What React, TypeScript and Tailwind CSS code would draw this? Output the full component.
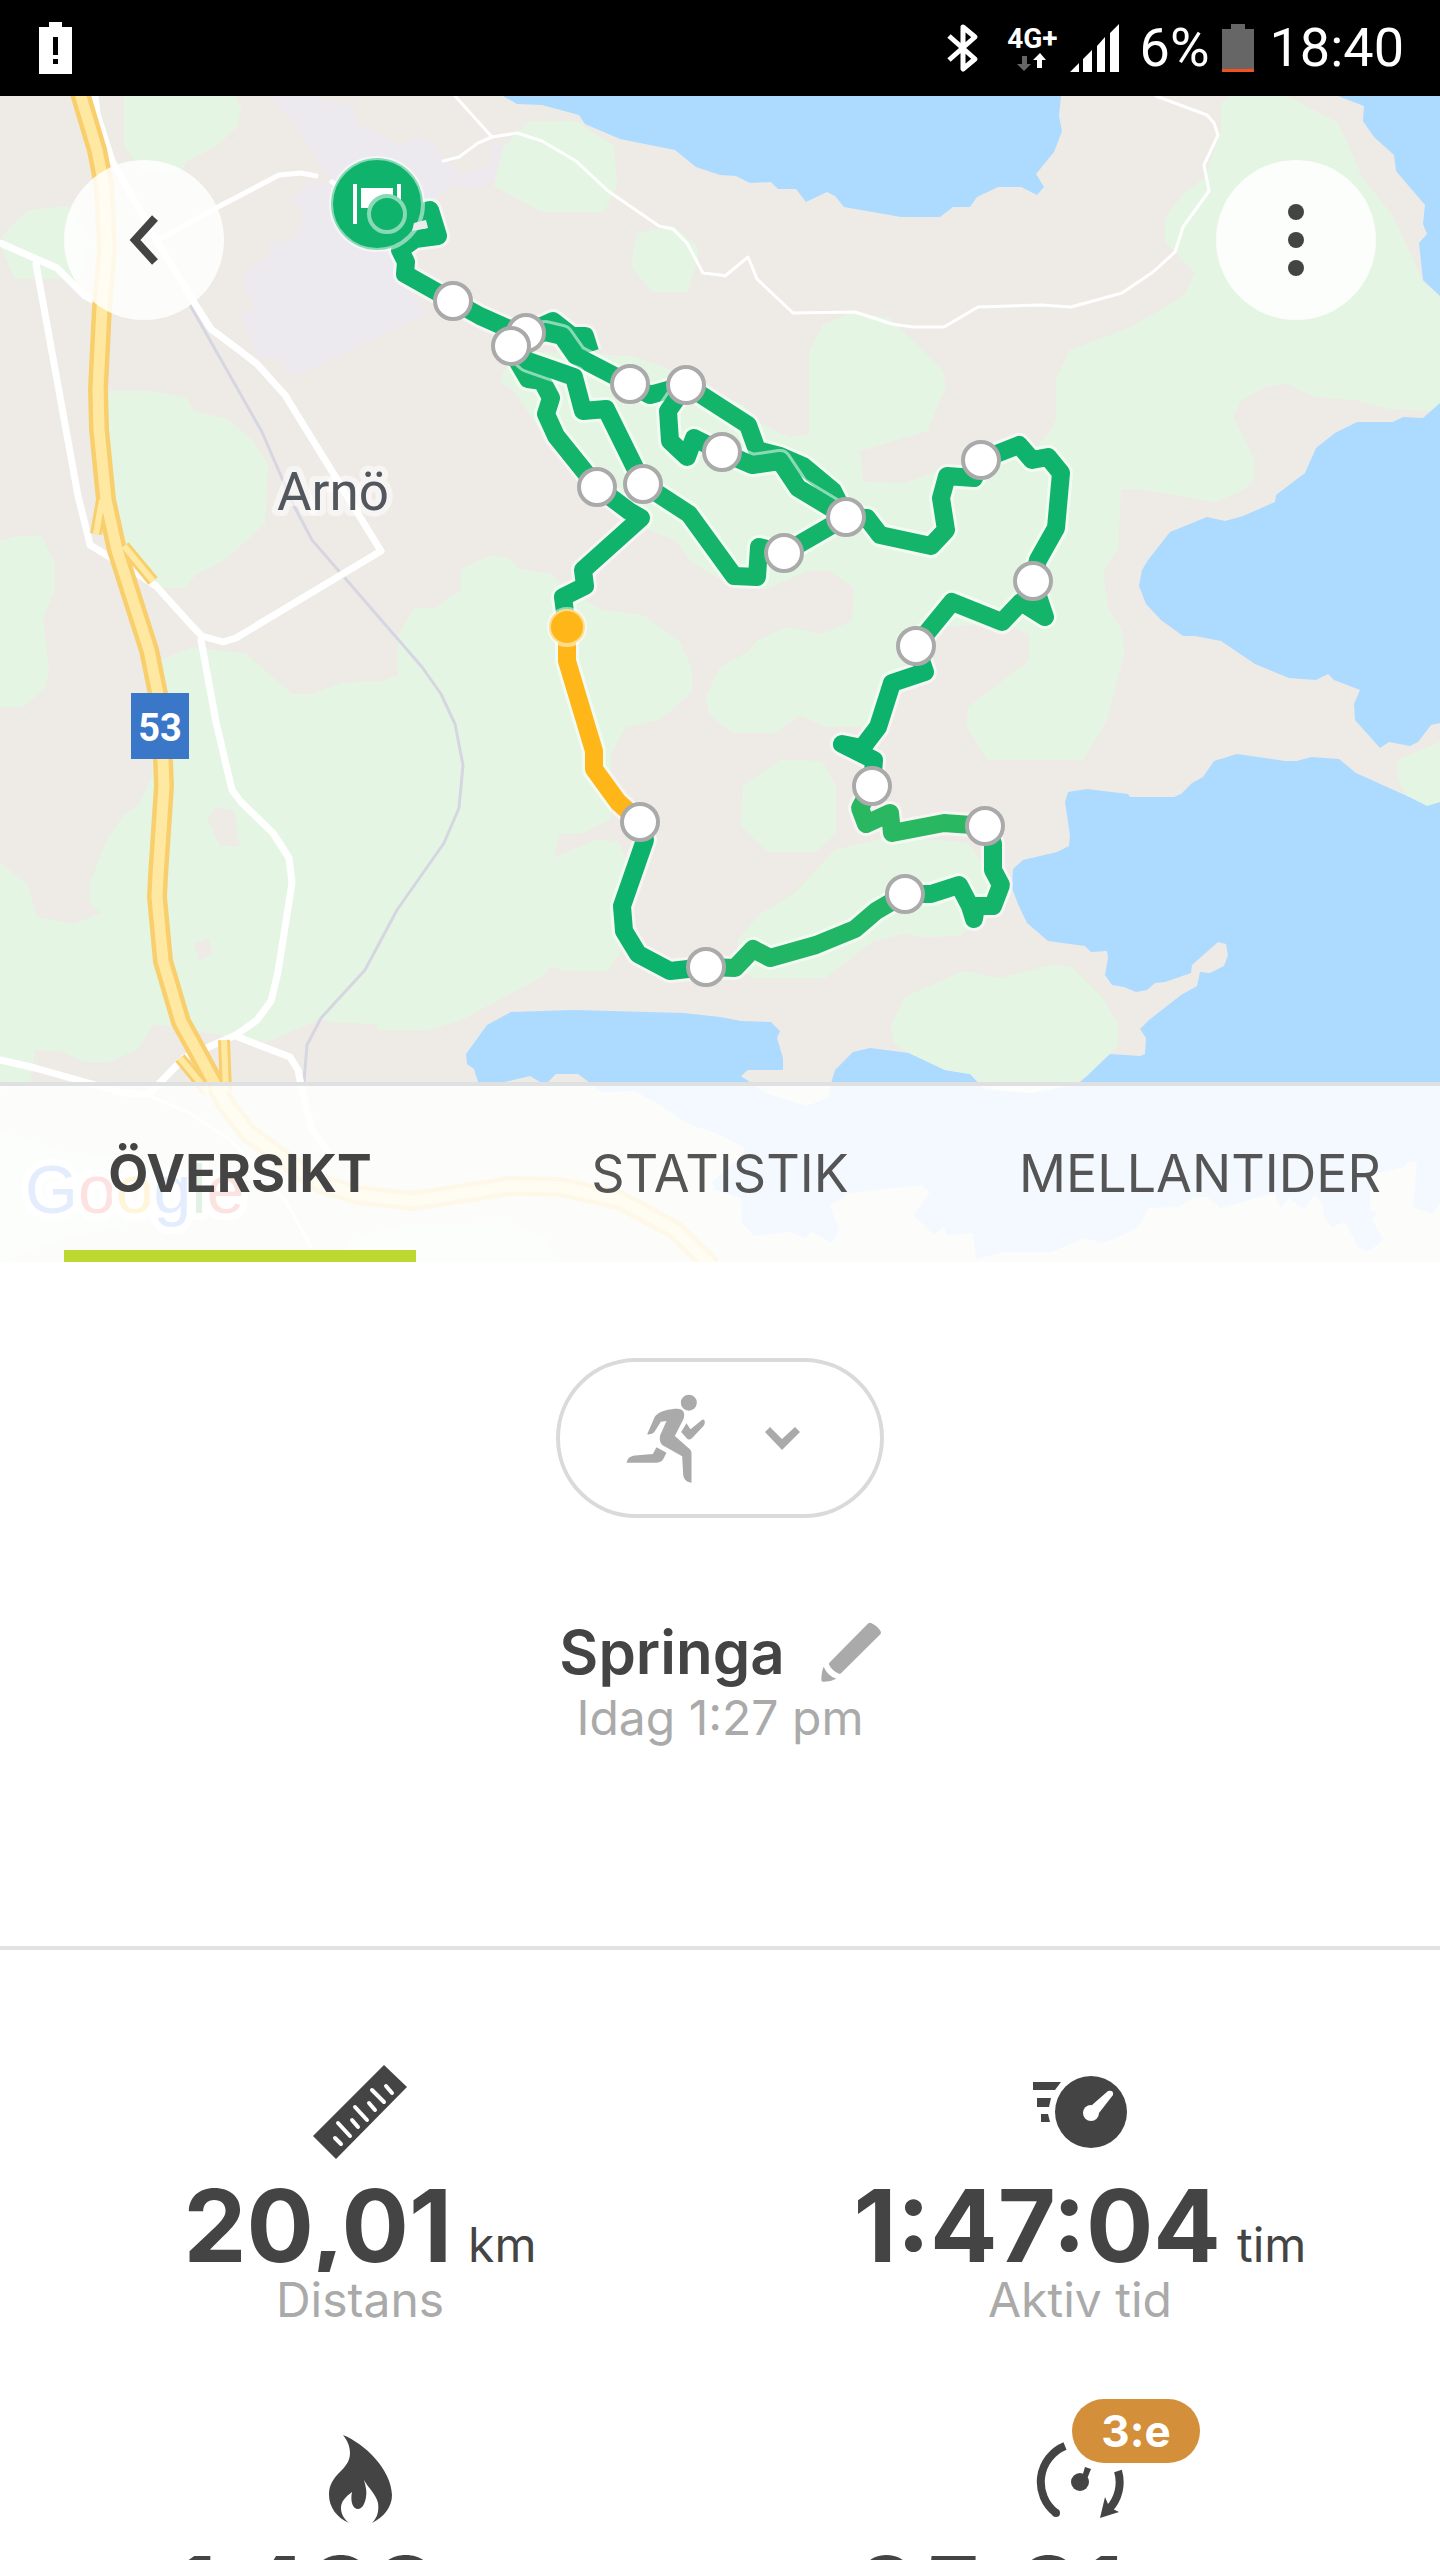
import React, { useState } from 'react'

type TabId = 'overview' | 'stats' | 'splits'

const TABS: { id: TabId; label: string }[] = [
  { id: 'overview', label: 'ÖVERSIKT' },
  { id: 'stats', label: 'STATISTIK' },
  { id: 'splits', label: 'MELLANTIDER' },
]

const PARKS = [
  '124,96 124,145 142,171 181,171 187,161 216,146 237,127 241,107 235,96',
  '3,235 27,211 64,206 72,209 90,240 80,279 15,279 2,250',
  '105,391 152,391 186,398 194,411 227,419 253,441 268,464 265,523 246,541 223,561 195,575 186,588 156,588 135,570 120,540 108,500 100,430',
  '0,541 18,536 41,536 55,563 55,590 43,617 49,670 45,688 23,707 0,707',
  '530,121 576,121 614,146 617,186 604,212 542,212 494,186 503,148',
  '637,233 673,226 697,246 698,259 687,292 652,292 631,266',
  '503,371 528,352 597,354 634,357 666,368 720,396 743,404 759,423 789,437 809,435 809,352 823,325 853,312 890,318 943,371 946,387 927,431 860,451 863,482 906,483 950,466 977,461 1037,446 1048,434 1056,420 1056,379 1070,350 1129,328 1184,296 1195,273 1165,241 1165,218 1184,193 1206,177 1209,164 1221,132 1221,104 1230,96 1287,96 1338,123 1363,179 1393,216 1423,282 1440,296 1440,411 1390,409 1356,400 1315,397 1288,384 1266,386 1241,401 1233,416 1254,459 1254,479 1243,490 1215,502 1140,489 1121,489 1118,549 1103,571 1108,608 1122,631 1124,654 1107,720 1083,760 987,760 967,726 968,707 1029,661 1029,634 1009,626 973,625 940,627 890,680 872,727 826,727 799,715 776,733 733,733 720,724 709,713 706,697 720,667 748,652 757,641 786,627 823,634 852,621 854,588 830,571 810,570 766,589 734,586 720,579 693,563 675,540 647,529 597,493 542,432 514,391 501,382',
  '161,660 193,647 246,654 292,694 312,694 342,683 381,681 398,676 398,636 414,609 436,608 461,590 461,569 489,556 509,558 519,569 553,575 565,590 602,610 643,615 680,642 692,669 692,692 661,719 625,728 611,754 611,819 583,833 560,834 553,858 597,840 618,841 627,861 621,951 608,971 566,971 551,966 542,977 459,1021 427,1030 377,1030 377,1024 333,1022 321,1019 266,1042 248,1040 197,1031 154,1024 138,1049 110,1062 85,1062 60,1051 35,1050 30,1082 0,1090 0,863 28,885 37,917 73,924 102,913 90,904 90,883 108,838 124,815 138,806 152,777 152,694',
  '780,760 822,761 836,786 836,833 816,852 768,852 741,826 743,786',
  '835,850 895,836 968,843 994,880 990,915 959,936 920,937 905,933 872,942 825,978 752,978 738,965 738,940 759,915 796,892',
  '0,1130 60,1150 200,1170 190,1210 60,1240 0,1262',
  '350,1240 400,1225 510,1222 550,1240 555,1262 340,1262',
]

// drawn after the water
const SHORE_PARKS = [
  '963,971 1000,978 1051,965 1071,967 1103,998 1118,1024 1118,1045 1087,1076 1069,1086 1032,1093 995,1090 982,1085 970,1074 945,1070 911,1054 894,1044 891,1026 905,997',
  '1398,760 1440,742 1440,802 1427,806 1406,795 1398,779',
]

const CLEARINGS = ['216,807 234,810 240,846 220,846 207,818', '194,943 209,938 213,954 199,961']

const URBAN =
  '269,96 298,127 317,161 331,182 308,184 289,198 303,214 294,239 266,243 272,255 248,268 242,282 253,307 240,316 259,359 276,357 294,377 427,314 400,270 420,210 450,186 478,189 494,179 503,145 491,141 491,164 461,175 432,143 419,137 400,145 356,123 354,105 321,102 320,96'

const WATER = [
  '503,96 517,104 542,105 579,115 585,124 620,139 675,150 696,167 720,175 736,176 750,183 771,182 778,189 796,189 806,202 827,192 835,196 844,207 901,217 940,217 953,207 970,207 977,197 998,187 1021,187 1037,195 1044,187 1036,174 1054,152 1062,131 1059,116 1061,96',
  '1338,96 1364,106 1363,121 1374,137 1394,155 1396,171 1425,205 1423,224 1427,234 1419,243 1423,280 1440,296 1440,96',
  '1440,403 1423,418 1403,417 1393,422 1357,422 1335,433 1316,448 1305,473 1276,495 1275,502 1243,516 1225,521 1207,517 1170,532 1148,560 1142,570 1139,586 1146,604 1161,620 1183,636 1195,636 1221,641 1255,664 1289,678 1316,680 1328,674 1334,680 1360,690 1354,704 1355,720 1380,748 1389,742 1410,746 1418,742 1431,725 1440,723',
  '1068,792 1087,789 1128,794 1130,797 1174,797 1181,794 1192,783 1203,777 1214,761 1237,754 1285,761 1297,761 1311,757 1339,759 1356,773 1427,805 1440,802 1440,1084 1078,1084 1110,1054 1140,1056 1145,1054 1146,1038 1140,1029 1149,1020 1181,995 1197,986 1200,972 1210,973 1224,966 1228,955 1226,944 1218,942 1192,965 1191,973 1165,982 1155,983 1147,990 1136,992 1124,987 1112,985 1105,975 1108,958 1107,951 1091,952 1085,946 1048,941 1027,923 1018,904 1012,888 1013,869 1023,860 1057,852 1069,846 1070,835 1065,802',
  '511,1012 574,1010 684,1013 720,1017 741,1021 771,1022 780,1031 777,1038 783,1058 783,1070 748,1070 741,1076 766,1093 806,1106 828,1098 832,1080 835,1070 853,1052 870,1048 909,1053 945,1070 970,1074 985,1090 1032,1093 1078,1082 1440,1082 1440,1203 1432,1214 1413,1207 1417,1162 1409,1161 1404,1167 1370,1175 1370,1210 1377,1212 1372,1220 1384,1240 1367,1252 1358,1247 1345,1222 1332,1227 1324,1217 1322,1202 1314,1195 1304,1210 1289,1198 1280,1208 1275,1193 1232,1205 1220,1208 1207,1197 1195,1197 1179,1207 1149,1208 1138,1227 1117,1238 1102,1243 1085,1238 1051,1252 1005,1252 976,1259 973,1233 947,1235 944,1227 934,1235 913,1215 930,1192 922,1185 849,1193 830,1206 839,1230 832,1243 812,1232 805,1238 789,1232 754,1236 742,1223 741,1198 715,1190 712,1182 720,1175 741,1157 745,1148 720,1135 686,1123 657,1103 634,1091 602,1092 578,1074 556,1074 548,1082 540,1082 530,1076 505,1082 478,1082 474,1069 467,1064 466,1054 487,1025',
]

const ROADS = [
  '95,96 97,114 112,161 138,207 158,243 197,307 211,329 239,350 257,364 285,395 381,551 236,638 223,642 202,636 193,627 156,586 138,574 90,545 88,536 78,496 36,264',
  '0,243 57,268 85,296 100,304',
  '201,640 216,722 232,790 241,802 273,833 289,858 292,883 278,972 271,1001 257,1020 236,1035 184,1058 149,1094 124,1093 35,1068 0,1060',
  '238,1037 290,1057 298,1070 302,1090 312,1130 328,1152',
]

const PATHS = [
  '455,96 492,137 478,143 459,157 443,161',
  '492,137 517,133 542,141 576,161 608,191 659,226 673,229 687,243 703,273 720,275 725,276 748,257 757,279 793,313 855,312 892,324 913,327 944,327 978,307 1041,305 1071,307 1122,293 1153,272 1175,252 1183,227 1209,191 1204,165 1218,135 1214,123 1207,115 1156,96',
  '149,1096 190,1113 230,1140 250,1160 285,1200 311,1247',
]

const RAILWAY =
  '190,305 262,432 294,506 312,540 422,667 441,694 455,724 463,765 459,808 444,843 397,910 365,970 321,1018 307,1045 304,1082'

const HIGHWAY =
  '79,90 97,150 104,186 107,250 102,307 98,389 99,429 106,500 117,550 131,594 149,650 158,694 163,761 164,786 158,876 157,897 163,961 181,1022 197,1051 225,1103 248,1133 285,1160 321,1184 358,1195 413,1201 459,1194 510,1186 560,1187 620,1200 675,1230 712,1266'

const RAMPS = ['124,546 153,581', '102,500 96,534', '180,1058 208,1092', '224,1040 226,1092']

// one entry per stretch between kilometre markers, coloured by pace
const ROUTE: { points: string; color: string }[] = [
  { points: '387,214 405,216 430,210 438,236 415,239 400,250 406,262 405,274 453,301', color: '#10b36b' },
  { points: '453,301 480,316 507,328 526,333 553,321 572,336 585,336 590,352', color: '#10b36b' },
  { points: '511,346 545,332 562,336 576,356 630,384 650,395 686,385', color: '#10b36b' },
  { points: '686,385 748,425 757,450 780,456 803,466 833,491 846,517', color: '#14b46a' },
  { points: '686,385 668,411 670,441 687,457 694,438 722,452', color: '#10b36b' },
  { points: '722,452 752,465 780,461 798,488 846,517', color: '#14b46a' },
  { points: '846,517 867,518 880,535 931,546 946,530 941,498 947,476 974,478 981,460', color: '#14b46a' },
  { points: '981,460 1019,445 1032,460 1048,457 1061,473 1056,528 1038,560 1033,581', color: '#10b36b' },
  { points: '1033,581 1045,617 1021,602 1002,622 952,602 916,646', color: '#14b46a' },
  { points: '916,646 925,672 892,683 878,727 862,748 842,744 874,760 872,786', color: '#0db36c' },
  { points: '872,786 860,808 866,824 890,813 892,833 944,823 985,826', color: '#29b861' },
  { points: '985,826 993,844 993,870 1001,885 993,906 976,906 974,919 970,906 959,885 931,894 905,894', color: '#14b46a' },
  { points: '905,894 876,911 855,929 816,945 770,958 753,949 735,968 706,967', color: '#20b665' },
  { points: '706,967 670,971 638,954 624,931 622,906 645,840 640,822', color: '#0db36c' },
  { points: '567,627 563,597 585,586 583,570 641,518 629,511 597,487', color: '#10b36b' },
  { points: '640,822 618,802 594,769 594,751 567,661 567,627', color: '#ffb618' },
  { points: '597,487 556,436 546,414 551,398 542,381 528,379 511,350', color: '#14b46a' },
  { points: '846,517 784,553 759,547 757,577 734,576 689,514 643,484', color: '#14b46a' },
  { points: '643,484 606,409 583,411 574,377 528,361 511,346', color: '#10b36b' },
]

const MARKERS = [
  [453, 301], [526, 333], [511, 346], [630, 384], [686, 385], [597, 487], [643, 484],
  [722, 452], [981, 460], [846, 517], [784, 553], [1033, 581], [916, 646], [872, 786],
  [985, 826], [905, 894], [640, 822], [706, 967],
]

const GOOGLE: [string, string][] = [
  ['G', '#4285f4'],
  ['o', '#ea4335'],
  ['o', '#fbbc05'],
  ['g', '#4285f4'],
  ['l', '#34a853'],
  ['e', '#ea4335'],
]

const RouteMap: React.FC = () => (
  <svg
    viewBox="0 96 1440 1166"
    preserveAspectRatio="xMidYMid slice"
    className="block h-[1166px] w-full bg-[#eeebe6]"
    role="img"
    aria-label="Karta"
  >
    <polygon points={URBAN} fill="#eceaee" />
    {PARKS.map((p) => <polygon key={p} points={p} fill="#e4f6e3" />)}
    {CLEARINGS.map((p) => <polygon key={p} points={p} fill="#eeebe6" />)}
    {WATER.map((p) => <polygon key={p} points={p} fill="#addaff" />)}
    {SHORE_PARKS.map((p) => <polygon key={p} points={p} fill="#e4f6e3" />)}

    <g fill="none" strokeLinejoin="round">
      <polyline points={RAILWAY} stroke="#d6d6e2" strokeWidth="3" />
      <g stroke="#fff" strokeLinecap="round">
        {ROADS.map((p) => <polyline key={p} points={p} strokeWidth="7" />)}
        {PATHS.map((p) => <polyline key={p} points={p} strokeWidth="3" />)}
        <polyline points="158,240 218,207 279,175 301,173 316,176" strokeWidth="5" />
        <path d="M332 182l4 3" strokeWidth="5" />
      </g>
      {RAMPS.map((p) => <polyline key={p} points={p} stroke="#f8cf6c" strokeWidth="12" />)}
      <polyline points={HIGHWAY} stroke="#f8cf6c" strokeWidth="20" />
      {RAMPS.map((p) => <polyline key={p} points={p} stroke="#ffe9a2" strokeWidth="6" />)}
      <polyline points={HIGHWAY} stroke="#ffe9a2" strokeWidth="11" />
    </g>

    <rect x="131" y="693" width="58" height="66" fill="#3a77c8" />
    <text x="160" y="741" textAnchor="middle" fill="#fff" fontFamily="Roboto, sans-serif" fontWeight="700" fontSize="38">53</text>
    <text
      x="277"
      y="510"
      fill="#52575e"
      stroke="#fff"
      strokeOpacity="0.5"
      strokeWidth="12"
      strokeLinejoin="round"
      paintOrder="stroke"
      fontFamily="Roboto, sans-serif"
      fontSize="53"
    >
      Arnö
    </text>

    <g fill="none" strokeLinejoin="round">
      {ROUTE.map((r) => (
        <g key={r.points}>
          <polyline points={r.points} stroke="#fff" strokeOpacity="0.5" strokeWidth="24" />
          <polyline points={r.points} stroke={r.color} strokeWidth="18" />
        </g>
      ))}
    </g>
    <circle cx="567" cy="627" r="18" fill="#ffb618" stroke="#fff" strokeOpacity="0.5" strokeWidth="4" />
    {MARKERS.map(([x, y]) => (
      <circle key={`${x}-${y}`} cx={x} cy={y} r="18" fill="#fff" stroke="#aaa" strokeWidth="4" />
    ))}

    {/* start / finish */}
    <circle cx="377" cy="204" r="46" fill="#10b36b" stroke="#fff" strokeOpacity="0.5" strokeWidth="4" />
    <path d="M353 184h4v40h-4zM397 184h4v40h-4zM361 188h32v20h-32z" fill="#fff" />
    <circle cx="387" cy="214" r="18" fill="#10b36b" stroke="#88d9b5" strokeWidth="4" />
    <path d="M414 223l12-3 2 8-16 3z" fill="#eeebee" />

    <text
      x="25"
      y="1213"
      stroke="#fff"
      strokeWidth="14"
      strokeLinejoin="round"
      paintOrder="stroke"
      fontFamily="Liberation Sans, sans-serif"
      fontSize="68"
    >
      {GOOGLE.map(([ch, fill], i) => <tspan key={i} fill={fill}>{ch}</tspan>)}
    </text>
  </svg>
)

const StatusBar: React.FC = () => (
  <div className="flex h-24 shrink-0 items-center justify-between bg-black pr-9 pl-[39px] font-[Roboto,sans-serif] text-white">
    <svg width="33" height="52" viewBox="0 0 33 52">
      <path d="M10 0h13v5h10v47H0V5h10z" fill="#fff" />
      <path d="M14 15h5v18h-5zM14 37h5v5h-5z" fill="#000" />
    </svg>
    <div className="flex items-center">
      <svg width="32" height="50" viewBox="0 0 32 50" className="mr-7">
        <path d="M2 13l26 23-12 10V4l12 10L2 37" fill="none" stroke="#fff" strokeWidth="5" strokeLinejoin="round" />
      </svg>
      <div className="mr-3 flex flex-col items-center">
        <span className="text-[28px] leading-7 font-bold">4G+</span>
        <svg width="30" height="18" viewBox="0 0 30 18">
          <path d="M5 3h5v8h4l-7 7-7-7h5z" fill="#666" />
          <path d="M20 15h5V7h4l-6-7-7 7h4z" fill="#fff" />
        </svg>
      </div>
      <svg width="50" height="48" viewBox="0 0 50 48" className="mr-5" fill="#fff">
        <path d="M0 48l9-9v9zM13 35l9-9v22h-9zM27 22l8-9v35h-8zM40 9l9-9v48h-9z" />
      </svg>
      <span className="mr-3 text-[54px] leading-none">6%</span>
      <svg width="32" height="48" viewBox="0 0 32 48" className="mr-4">
        <path d="M9 0h14v5h9v43H0V5h9z" fill="#666" />
        <path d="M0 45h32v3H0z" fill="#f4511e" />
      </svg>
      <span className="text-[54px] leading-none">18:40</span>
    </div>
  </div>
)

const RunnerIcon = () => (
  <svg width="79" height="89" viewBox="0 0 236 267" fill="#aaa">
    <circle cx="188" cy="26" r="24" />
    <path d="M63 121L84 73C92 50 135 44 153 44C172 44 178 58 172 75L146 126L191 166C195 170 196 174 196 178V266C178 264 172 252 171 242L168 187L108 153C100 145 100 135 102 124L121 81L104 83L86 112C82 119 75 122 63 121Z" />
    <path d="M181 88L193 106L228 77Q236 74 236 85Q236 92 232 96L198 132Q188 141 181 132L165 114Z" />
    <path d="M91 160L121 176L111 196Q105 206 91 206H1Q3 185 35 184L80 180Z" />
  </svg>
)

const PencilIcon = () => (
  <svg width="60" height="60" viewBox="0 0 180 180" fill="#aaa">
    <path d="M25 122L142 4Q146 1 150 3Q168 10 179 28Q181 33 178 37L60 154Q56 157 51 154Q34 146 25 130Q23 126 25 122Z" />
    <path d="M8 134Q20 162 46 170Q28 180 6 179Q1 179 1 174Q1 150 8 134Z" />
  </svg>
)

const RulerIcon = () => (
  <svg width="94" height="94" viewBox="0 0 94 94">
    <path d="M71 0L94 22L23 94L0 71Z" fill="#444" />
    <path
      d="M22 73l6 6M25 58l12 13M39 55l6 7M42 42l12 13M56 38l6 7M59 25l12 12M73 21l6 7"
      stroke="#fff"
      strokeWidth="4"
      strokeLinecap="round"
    />
  </svg>
)

const ClockIcon = () => (
  <svg width="94" height="73" viewBox="0 0 94 73">
    <circle cx="58" cy="36" r="36" fill="#444" />
    <path d="M0 6h28l-6 8H0zM4 22h14l-2 9H4zM8 38h7l2 8H8z" fill="#444" />
    <circle cx="58" cy="37" r="8" fill="#fff" />
    <path d="M59 29L75 15Q81 14 80 19L66 37Z" fill="#fff" />
  </svg>
)

const FlameIcon = () => (
  <svg width="63" height="88" viewBox="0 0 63 88">
    <path
      d="M14 0C36 9 62 34 63 60C63 72 55 82 43 88C49 82 50 75 49 68C47 59 40 54 35 45C37 52 38 57 37 62C36 69 33 74 29 74C24 74 21 67 23 57C16 62 12 67 12 73C12 79 15 84 20 88C8 83 0 72 0 60C0 38 21 36 21 18C21 11 18 5 14 0Z"
      fill="#444"
    />
  </svg>
)

const PaceIcon = () => (
  <svg width="88" height="88" viewBox="0 0 88 88">
    <path d="M29 11A39 39 0 0 0 20 78" fill="none" stroke="#444" strokeWidth="8" />
    <circle cx="20" cy="78" r="4" fill="#444" />
    <path d="M82 36A39 39 0 0 1 73 74" fill="none" stroke="#444" strokeWidth="8" />
    <path d="M64 83L69 62L72 69L77 74L83 77Z" fill="#444" />
    <circle cx="44" cy="47" r="9" fill="#444" />
    <path d="M46 42L49 32L55 34L51 44Z" fill="#444" />
  </svg>
)

interface StatProps {
  icon: React.ReactNode
  value: string
  unit: string
  label: string
  badge?: string
}

const Stat: React.FC<StatProps> = ({ icon, value, unit, label, badge }) => (
  <div className="flex flex-col items-center">
    <div className="relative flex h-24 items-center">
      {icon}
      {badge && (
        <span className="absolute -top-8 left-9 flex h-16 w-32 items-center justify-center rounded-full bg-[#d38f3a] text-[44px] font-bold text-white">
          {badge}
        </span>
      )}
    </div>
    <div className="mt-[18px] flex h-[94px] items-baseline gap-4 overflow-hidden whitespace-nowrap">
      <span className="text-[100px] leading-[96px] font-bold">{value}</span>
      <span className="text-[48px] leading-14">{unit}</span>
    </div>
    <p className="text-[48px] leading-14 text-[#aaa]">{label}</p>
  </div>
)

const App: React.FC = () => {
  const [tab, setTab] = useState<TabId>('overview')

  return (
    <div className="flex h-screen flex-col overflow-hidden bg-white font-[Inter,sans-serif] text-[#444]">
      <StatusBar />

      <main className="flex-1 overflow-y-auto [scrollbar-width:none]">
        <div className="relative">
          <RouteMap />

          <div className="absolute inset-x-0 top-16 flex justify-between px-16">
            <button type="button" aria-label="Tillbaka" className="flex size-40 items-center justify-center rounded-full bg-white/85">
              <svg width="30" height="50" viewBox="0 0 30 50">
                <path d="M26 3L6 25L26 47" fill="none" stroke="#444" strokeWidth="8" />
              </svg>
            </button>
            <button type="button" aria-label="Mer" className="flex size-40 flex-col items-center justify-center gap-3 rounded-full bg-white/85">
              <span className="size-4 rounded-full bg-[#444]" />
              <span className="size-4 rounded-full bg-[#444]" />
              <span className="size-4 rounded-full bg-[#444]" />
            </button>
          </div>

          <nav className="absolute inset-x-0 bottom-0 grid h-45 grid-cols-3 border-t-4 border-[#dfe0e1] bg-white/85">
            {TABS.map((t) => (
              <button
                key={t.id}
                type="button"
                onClick={() => setTab(t.id)}
                className={
                  tab === t.id
                    ? 'relative text-[52px] font-bold text-[#444]'
                    : 'relative text-[52px] text-[#555]'
                }
              >
                {t.label}
                {tab === t.id && <span className="absolute inset-x-16 bottom-0 h-3 bg-[#bdd831]" />}
              </button>
            ))}
          </nav>
        </div>

        <section className="flex flex-col items-center border-b-4 border-[#e2e2e2] pt-24 pb-50">
          <button
            type="button"
            aria-label="Aktivitet"
            className="flex h-40 w-[328px] items-center gap-15 rounded-full border-4 border-[#dadada] pl-[66px]"
          >
            <RunnerIcon />
            <svg width="35" height="23" viewBox="0 0 35 23">
              <path d="M0 5L5 0L17 12L30 0L35 5L17 23Z" fill="#aaa" />
            </svg>
          </button>

          <div className="mt-25 flex items-center gap-9">
            <h1 className="text-[60px] leading-17 font-semibold">Springa</h1>
            <button type="button" aria-label="Redigera">
              <PencilIcon />
            </button>
          </div>
          <p className="mt-1 text-[48px] leading-14 text-[#aaa]">Idag 1:27 pm</p>
        </section>

        <section className="grid grid-cols-2 gap-y-[103px] pt-[114px]">
          <Stat icon={<RulerIcon />} value="20,01" unit="km" label="Distans" />
          <Stat icon={<ClockIcon />} value="1:47:04" unit="tim" label="Aktiv tid" />
          <Stat icon={<FlameIcon />} value="1 488" unit="kcal" label="Kalorier" />
          <Stat icon={<PaceIcon />} value="05:21" unit="min/km" label="Medeltempo" badge="3:e" />
        </section>
      </main>
    </div>
  )
}

export default App
